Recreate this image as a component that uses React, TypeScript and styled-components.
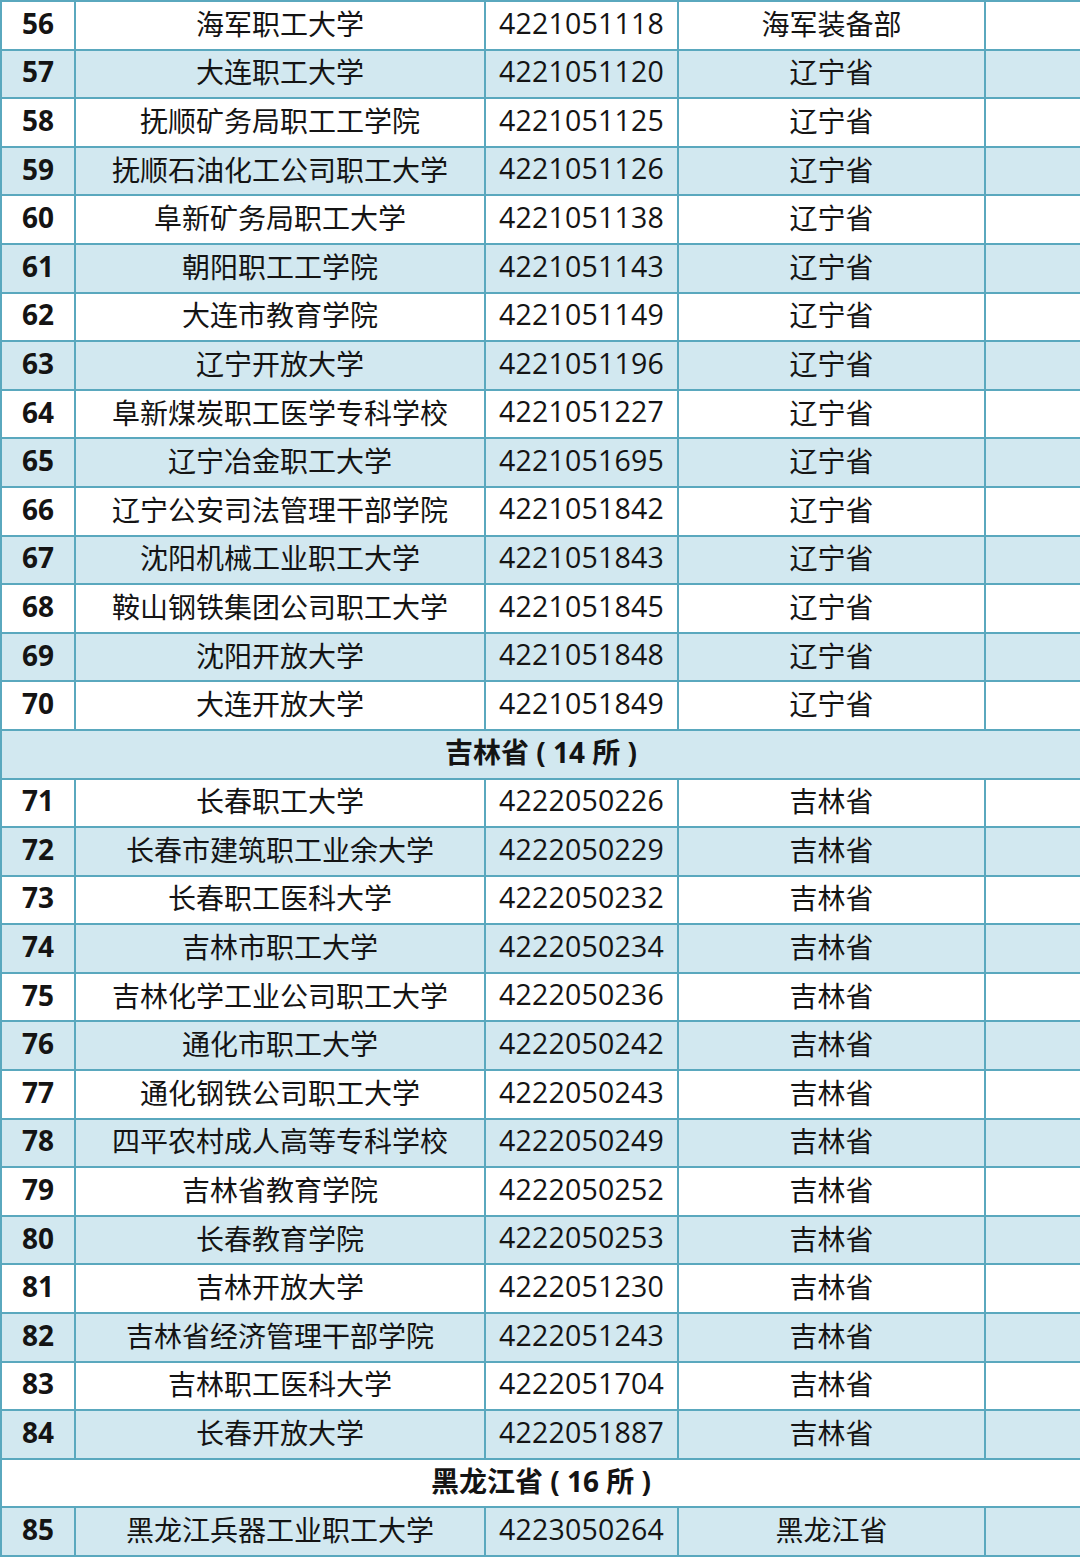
import styled, { createGlobalStyle } from "styled-components"

const Global = createGlobalStyle`
  html, body { margin: 0; padding: 0; background: #fff; }
`

const Table = styled.table`
  width: 1080px;
  border-collapse: collapse;
  table-layout: fixed;
  border: 2px solid #5aa8be;
  font-family: "Open Sans", "Noto Sans CJK SC", sans-serif;
  color: #141414;
`

const Col = styled.col<{ $w: number }>`
  width: ${(p) => p.$w}px;
`

const Row = styled.tr<{ $shade: boolean }>`
  height: 48.6px;
  background: ${(p) => (p.$shade ? "#d2e8f0" : "#ffffff")};
`

const Cell = styled.td<{ $bold?: boolean }>`
  border: 2.5px solid #5aa8be;
  padding: 0 0 5px;
  text-align: center;
  vertical-align: middle;
  font-size: 28px;
  line-height: 1;
  font-weight: ${(p) => (p.$bold ? 700 : 400)};
  font-family: ${(p) =>
    p.$bold ? `"Open Sans", "Noto Sans CJK SC", sans-serif` : `"Noto Sans CJK SC", sans-serif`};
`

const Code = styled(Cell)`
  font-family: "Open Sans", sans-serif;
  font-size: 28.5px;
  letter-spacing: 0.2px;
`

const Section = styled.td`
  border: 2.5px solid #5aa8be;
  padding: 0 0 5px;
  text-align: center;
  vertical-align: middle;
  font-size: 28px;
  line-height: 1;
  font-weight: 700;
  font-family: "Open Sans", "Noto Sans CJK SC", sans-serif;
`

type Item = [number, string, string, string] | string

const rows: Item[] = [
  [56, "海军职工大学", "4221051118", "海军装备部"],
  [57, "大连职工大学", "4221051120", "辽宁省"],
  [58, "抚顺矿务局职工工学院", "4221051125", "辽宁省"],
  [59, "抚顺石油化工公司职工大学", "4221051126", "辽宁省"],
  [60, "阜新矿务局职工大学", "4221051138", "辽宁省"],
  [61, "朝阳职工工学院", "4221051143", "辽宁省"],
  [62, "大连市教育学院", "4221051149", "辽宁省"],
  [63, "辽宁开放大学", "4221051196", "辽宁省"],
  [64, "阜新煤炭职工医学专科学校", "4221051227", "辽宁省"],
  [65, "辽宁冶金职工大学", "4221051695", "辽宁省"],
  [66, "辽宁公安司法管理干部学院", "4221051842", "辽宁省"],
  [67, "沈阳机械工业职工大学", "4221051843", "辽宁省"],
  [68, "鞍山钢铁集团公司职工大学", "4221051845", "辽宁省"],
  [69, "沈阳开放大学", "4221051848", "辽宁省"],
  [70, "大连开放大学", "4221051849", "辽宁省"],
  "吉林省 ( 14 所 )",
  [71, "长春职工大学", "4222050226", "吉林省"],
  [72, "长春市建筑职工业余大学", "4222050229", "吉林省"],
  [73, "长春职工医科大学", "4222050232", "吉林省"],
  [74, "吉林市职工大学", "4222050234", "吉林省"],
  [75, "吉林化学工业公司职工大学", "4222050236", "吉林省"],
  [76, "通化市职工大学", "4222050242", "吉林省"],
  [77, "通化钢铁公司职工大学", "4222050243", "吉林省"],
  [78, "四平农村成人高等专科学校", "4222050249", "吉林省"],
  [79, "吉林省教育学院", "4222050252", "吉林省"],
  [80, "长春教育学院", "4222050253", "吉林省"],
  [81, "吉林开放大学", "4222051230", "吉林省"],
  [82, "吉林省经济管理干部学院", "4222051243", "吉林省"],
  [83, "吉林职工医科大学", "4222051704", "吉林省"],
  [84, "长春开放大学", "4222051887", "吉林省"],
  "黑龙江省 ( 16 所 )",
  [85, "黑龙江兵器工业职工大学", "4223050264", "黑龙江省"],
]

export default function App() {
  return (
    <>
      <Global />
      <Table>
        <colgroup>
          <Col $w={74} />
          <Col $w={410} />
          <Col $w={193} />
          <Col $w={307} />
          <Col $w={96} />
        </colgroup>
        <tbody>
          {rows.map((r, i) =>
            typeof r === "string" ? (
              <Row key={i} $shade={i % 2 === 1}>
                <Section colSpan={5}>{r}</Section>
              </Row>
            ) : (
              <Row key={i} $shade={i % 2 === 1}>
                <Cell $bold>{r[0]}</Cell>
                <Cell>{r[1]}</Cell>
                <Code>{r[2]}</Code>
                <Cell>{r[3]}</Cell>
                <Cell></Cell>
              </Row>
            )
          )}
        </tbody>
      </Table>
    </>
  )
}
